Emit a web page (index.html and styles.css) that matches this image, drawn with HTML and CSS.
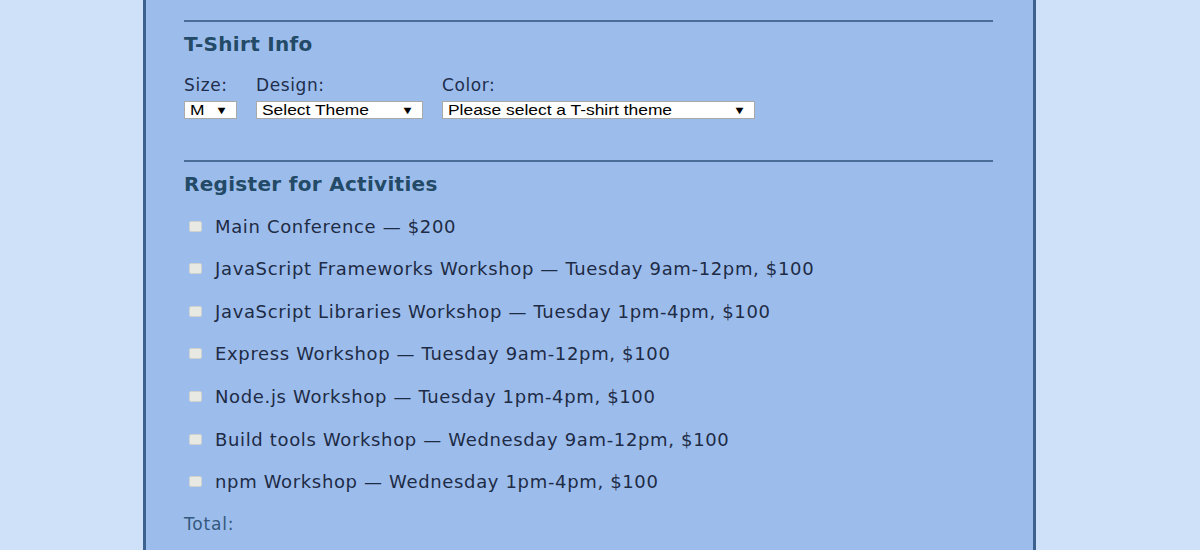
FILE: index.html
```html
<!DOCTYPE html>
<html>
<head>
<meta charset="utf-8">
<link rel="stylesheet" href="styles.css">
</head>
<body>
<div class="page">
  <form class="form">
    <fieldset class="section">
      <h2 class="section-title">T-Shirt Info</h2>
      <div class="shirt-row">
        <div class="field">
          <label class="field-label">Size:</label>
          <div class="select select-size"><span class="select-text">M</span><span class="arrow">▼</span></div>
        </div>
        <div class="field">
          <label class="field-label">Design:</label>
          <div class="select select-design"><span class="select-text">Select Theme</span><span class="arrow">▼</span></div>
        </div>
        <div class="field">
          <label class="field-label">Color:</label>
          <div class="select select-color"><span class="select-text">Please select a T-shirt theme</span><span class="arrow">▼</span></div>
        </div>
      </div>
    </fieldset>
    <fieldset class="section section-activities">
      <h2 class="section-title">Register for Activities</h2>
      <div class="activities">
        <label class="activity"><span class="check"></span>Main Conference — $200</label>
        <label class="activity"><span class="check"></span>JavaScript Frameworks Workshop — Tuesday 9am-12pm, $100</label>
        <label class="activity"><span class="check"></span>JavaScript Libraries Workshop — Tuesday 1pm-4pm, $100</label>
        <label class="activity"><span class="check"></span>Express Workshop — Tuesday 9am-12pm, $100</label>
        <label class="activity"><span class="check"></span>Node.js Workshop — Tuesday 1pm-4pm, $100</label>
        <label class="activity"><span class="check"></span>Build tools Workshop — Wednesday 9am-12pm, $100</label>
        <label class="activity"><span class="check"></span>npm Workshop — Wednesday 1pm-4pm, $100</label>
      </div>
      <p class="total">Total:</p>
    </fieldset>
  </form>
</div>
</body>
</html>
```
FILE: styles.css
```css
html, body {
  margin: 0;
  padding: 0;
  background: #cee1f9;
  height: 100%;
  overflow: hidden;
}
body {
  font-family: "DejaVu Sans", "Noto Sans", sans-serif;
  color: #1e2b45;
}
.page {
  height: 100%;
}
.form {
  box-sizing: border-box;
  width: 893px;
  height: 100%;
  margin-left: 143px;
  background: #9cbdec;
  border-left: 3px solid #3d6290;
  border-right: 3px solid #3d6290;
  padding: 20px 40px 0 38px;
}
.section {
  border: 0;
  border-top: 2px solid #4a6d98;
  margin: 0;
  padding: 0;
}
.section-activities {
  margin-top: 41px;
}
.section-title {
  margin: 10px 0 0;
  font-size: 20px;
  line-height: 24px;
  font-weight: 600;
  color: #234a66;
  letter-spacing: 0.3px;
}
.shirt-row {
  display: flex;
  gap: 19px;
  margin-top: 19px;
}
.field {
  display: flex;
  flex-direction: column;
}
.field-label {
  font-size: 17px;
  line-height: 20px;
  color: #1f2e4c;
  margin-bottom: 6px;
  letter-spacing: 0.6px;
}
.select {
  box-sizing: border-box;
  height: 18px;
  background: #fff;
  border: 1px solid #a9a9a9;
  display: flex;
  align-items: center;
  justify-content: space-between;
  padding: 0 9px 0 5px;
  font-family: "Liberation Sans", Arial, sans-serif;
  font-size: 15px;
  color: #000;
  overflow: hidden;
}
.select-text {
  display: inline-block;
  transform: scaleX(1.16);
  transform-origin: left center;
  line-height: 16px;
}
.arrow {
  font-size: 11px;
  transform: scaleX(1.2);
}
.select-size { width: 53px; }
.select-design { width: 167px; }
.select-color { width: 313px; }
.activities {
  margin-top: 8.7px;
  display: flex;
  flex-direction: column;
}
.activity {
  display: flex;
  align-items: center;
  height: 42.67px;
  font-size: 18px;
  letter-spacing: 0.65px;
  color: #1e2b45;
}
.check {
  box-sizing: border-box;
  width: 13px;
  height: 11px;
  margin: 0 13px 0 5px;
  background: #e9e9e4;
  border: 1px solid #cfd2cf;
  border-radius: 2px;
}
.total {
  margin: 10.7px 0 0;
  font-size: 17px;
  line-height: 20px;
  letter-spacing: 0.8px;
  color: #34587e;
}
```
